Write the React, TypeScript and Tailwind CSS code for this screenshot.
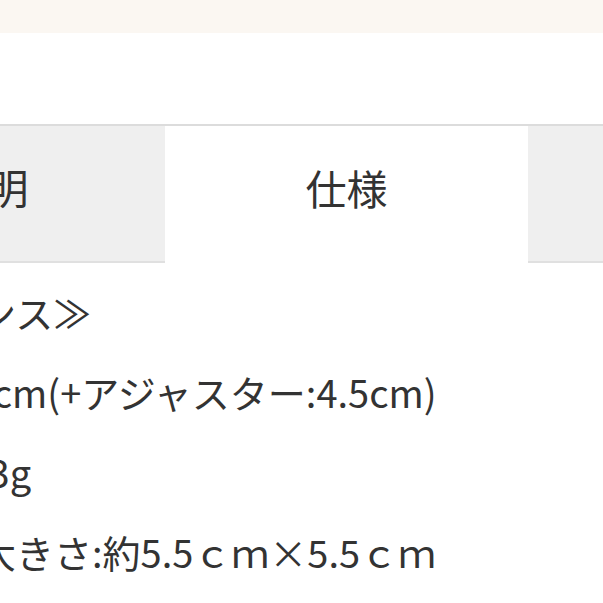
import React from 'react';

const specs = [
  '≪ライセンス≫',
  '長さ:約40cm(+アジャスター:4.5cm)',
  '・重さ:約3g',
  '・トップ大きさ:約5.5ｃｍ×5.5ｃｍ',
];

export default function App() {
  return (
    <div className="w-[603px] h-[603px] overflow-hidden bg-white text-[#333333] font-['Noto_Sans_CJK_JP',sans-serif]">
      {/* top band */}
      <div className="h-[33px] bg-[#fbf7f2]" />
      <div className="h-[91px]" />

      <div className="-ml-[198px] w-[1089px]">
        {/* Tabs */}
        <div className="flex h-[139px] border-t-2 border-[#dcdcdc]">
          <div className="w-[363px] shrink-0 flex items-center justify-center bg-[#efefef] border-b-2 border-[#e0e0e0] text-[41px] pb-[14px] pl-[8px]">
            説明
          </div>
          <div className="w-[363px] shrink-0 flex items-center justify-center bg-white text-[41px] pb-[14px]">
            仕様
          </div>
          <div className="w-[363px] shrink-0 bg-[#efefef] border-b-2 border-[#e0e0e0]" />
        </div>

        {/* Spec list */}
        <div className="pt-[9px] pl-[24px] text-[38px] leading-[80px] whitespace-nowrap">
          {specs.map((line) => (
            <p key={line}>{line}</p>
          ))}
        </div>
      </div>
    </div>
  );
}
